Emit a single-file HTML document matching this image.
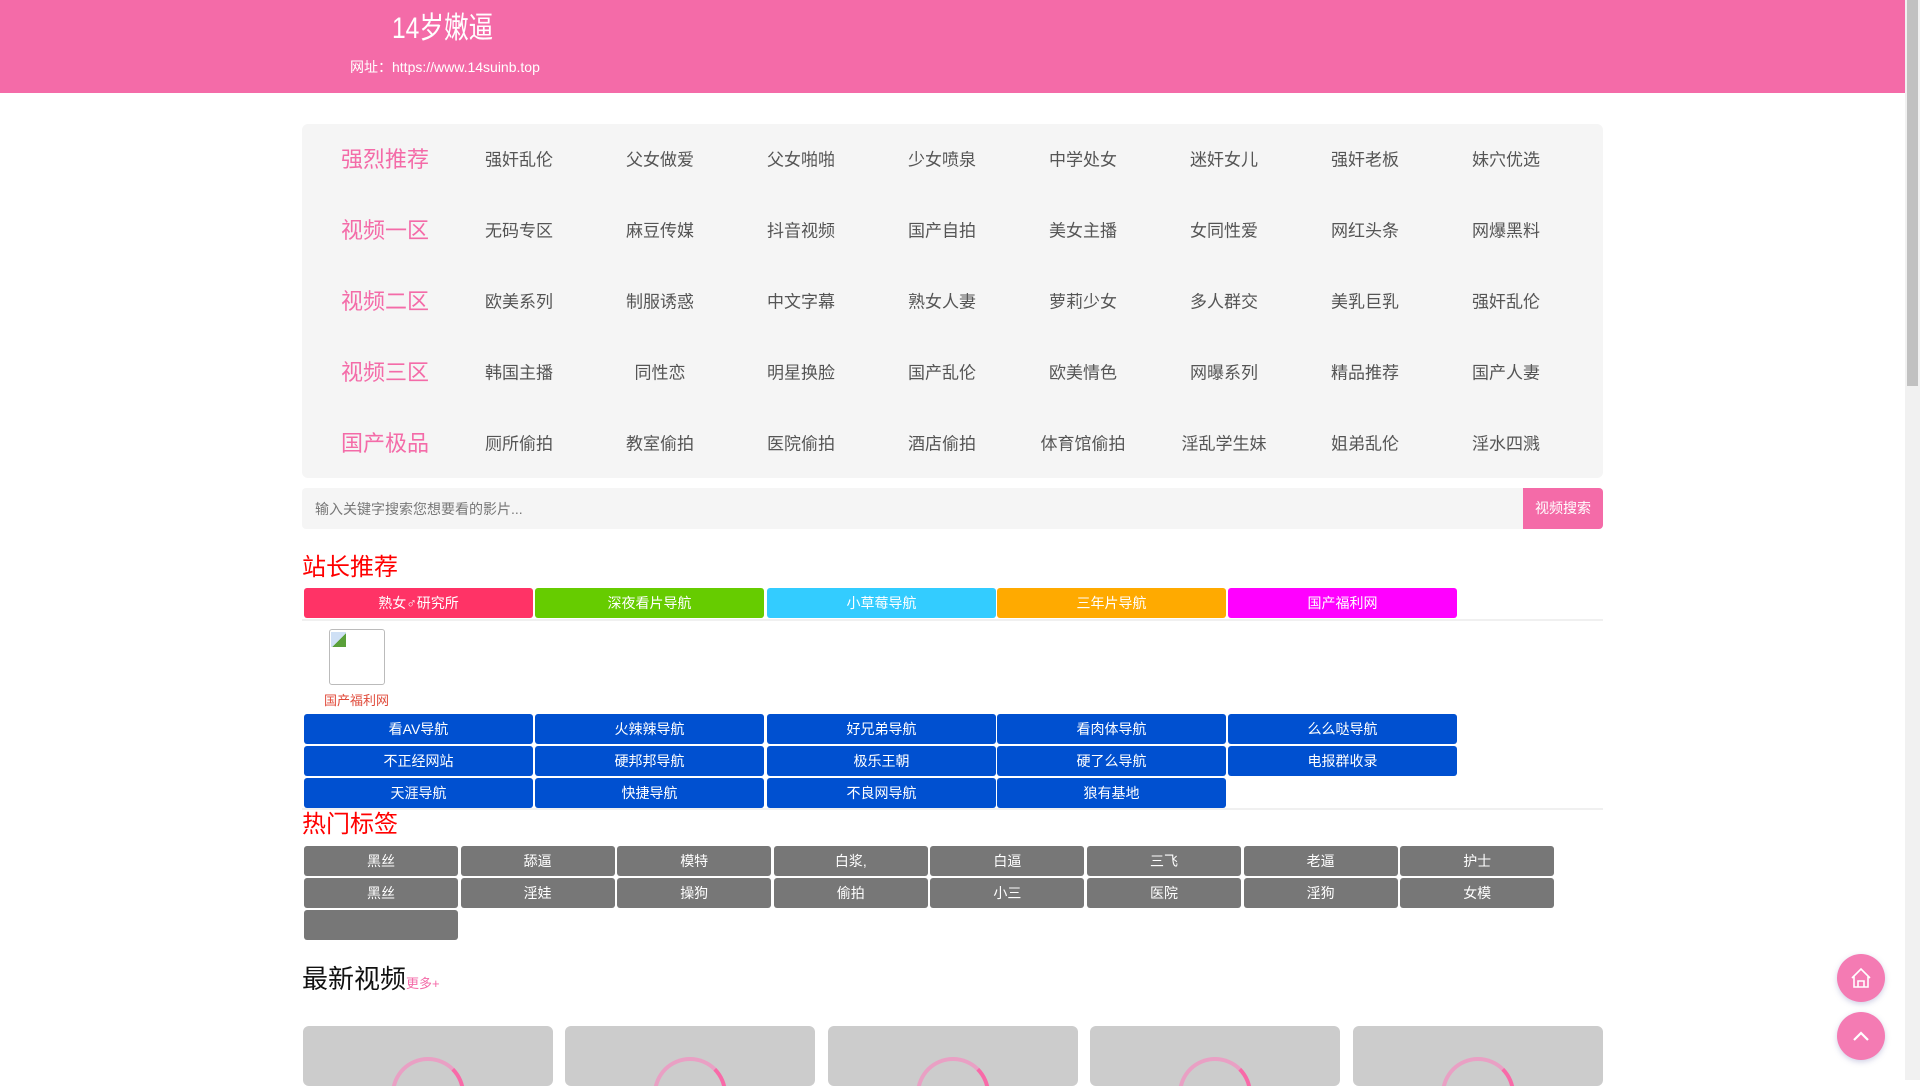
<!DOCTYPE html>
<html><head><meta charset="utf-8"><style>
*{margin:0;padding:0;box-sizing:border-box}
body{width:1920px;height:1080px;overflow:hidden;background:#fff;font-family:"Liberation Sans","Noto Sans CJK SC",sans-serif;position:relative}
.a{position:absolute}
.hdr{left:0;top:0;width:1905px;height:93px;background:#f46ba8}
.nav{left:302px;top:124px;width:1301px;height:354px;background:#f5f5f5;border-radius:6px}
.c{position:absolute;transform:translate(-50%,-50%);white-space:nowrap;font-size:17px;color:#555}
.c.r{color:#f46ba8;font-size:22px}
.btn{position:absolute;height:30px;line-height:30px;text-align:center;color:#fff;font-size:14px;border-radius:3px}
.tag{position:absolute;width:154px;height:30px;line-height:30px;text-align:center;color:#fff;font-size:14px;background:#777;border-radius:3px}
.card{position:absolute;top:1026px;width:250px;height:60px;background:#ccc;border-radius:6px;overflow:hidden}
.card i{position:absolute;left:88px;top:31px;width:74px;height:74px;border-radius:50%;border:4px solid #e9a0c4;border-top-color:#e9a0c4;border-right-color:#f86aa8}
.fb{position:absolute;left:1837px;width:48px;height:48px;border-radius:50%;background:#f47bb3;box-shadow:0 2px 6px rgba(120,120,180,.35)}
</style></head><body>
<div class="a hdr"></div>
<div class="a" style="left:392px;top:10px;color:#fff;font-size:30px;line-height:38px;transform:scaleX(0.82);transform-origin:left center">14岁嫩逼</div>
<div class="a" style="left:350px;top:58px;color:#fff;font-size:14px;line-height:18px">网址：https://www.14suinb.top</div>
<div class="a" style="left:1905px;top:0;width:15px;height:1080px;background:#f1f1f1"></div>
<div class="a" style="left:1907px;top:0;width:11px;height:386px;background:#c1c1c1"></div>
<div class="a nav"></div>
<div id="navc"></div>
<div class="a" style="left:302px;top:488px;width:1301px;height:41px;background:#f5f5f5;border-radius:4px"></div>
<div class="a" style="left:315px;top:499px;font-size:14px;color:#777">输入关键字搜索您想要看的影片...</div>
<div class="a" style="left:1523px;top:488px;width:80px;height:41px;background:#f46ba8;border-radius:0 4px 4px 0;color:#fff;font-size:14px;line-height:41px;text-align:center">视频搜索</div>
<div class="a" style="left:302px;top:553px;font-size:24px;color:#f00;line-height:30px">站长推荐</div>
<div class="a" style="left:302px;top:619px;width:1301px;height:2px;background:#f0f0f0"></div>
<div class="a" style="left:329px;top:629px;width:56px;height:56px;border:1px solid #bbb;border-radius:3px;background:#fff"></div>
<div class="a" style="left:331px;top:632px;width:15px;height:15px;background:linear-gradient(135deg,#cfe0f5 55%,#5aa03a 55%)"></div>
<div class="a" style="left:324px;top:690px;font-size:13px;color:#e04a3a">国产福利网</div>
<div class="a" style="left:302px;top:808px;width:1301px;height:2px;background:#f0f0f0"></div>
<div class="a" style="left:302px;top:810px;font-size:24px;color:#f00;line-height:30px">热门标签</div>
<div class="a" style="left:302px;top:962px;font-size:26px;color:#111;line-height:34px">最新视频<span style="font-size:13px;color:#f46ba8">更多+</span></div>
<div id="rest"></div>
<div class="fb" style="top:954px"><svg width="48" height="48" viewBox="0 0 48 48"><path d="M15 24 L24 15 L33 24 M17 22 V33 H31 V22 M21 33 V27 H27 V33" fill="none" stroke="#fff" stroke-width="1.6"/></svg></div>
<div class="fb" style="top:1012px"><svg width="48" height="48" viewBox="0 0 48 48"><path d="M17 28 L24 21 L31 28" fill="none" stroke="#fff" stroke-width="2.2"/></svg></div>
<script>
var rows=[["强烈推荐","强奸乱伦","父女做爱","父女啪啪","少女喷泉","中学处女","迷奸女儿","强奸老板","妹穴优选"],
["视频一区","无码专区","麻豆传媒","抖音视频","国产自拍","美女主播","女同性爱","网红头条","网爆黑料"],
["视频二区","欧美系列","制服诱惑","中文字幕","熟女人妻","萝莉少女","多人群交","美乳巨乳","强奸乱伦"],
["视频三区","韩国主播","同性恋","明星换脸","国产乱伦","欧美情色","网曝系列","精品推荐","国产人妻"],
["国产极品","厕所偷拍","教室偷拍","医院偷拍","酒店偷拍","体育馆偷拍","淫乱学生妹","姐弟乱伦","淫水四溅"]];
var xs=[385,519,660,801,942,1083,1224,1365,1506],h="";
rows.forEach(function(r,i){r.forEach(function(t,j){h+='<div class="c'+(j?'':' r')+'" style="left:'+xs[j]+'px;top:'+(158+i*71)+'px">'+t+'</div>';});});
document.getElementById('navc').innerHTML=h;
h="";
var bx=[304,535,767,997,1228];
var top1=[["熟女♂研究所","#ff3366"],["深夜看片导航","#66cc00"],["小草莓导航","#33ccff"],["三年片导航","#ffaa00"],["国产福利网","#ff00ff"]];
top1.forEach(function(b,i){h+='<div class="btn" style="left:'+bx[i]+'px;top:588px;width:229px;background:'+b[1]+'">'+b[0]+'</div>';});
var blue=[["看AV导航","火辣辣导航","好兄弟导航","看肉体导航","么么哒导航"],["不正经网站","硬邦邦导航","极乐王朝","硬了么导航","电报群收录"],["天涯导航","快捷导航","不良网导航","狼有基地"]];
blue.forEach(function(r,i){r.forEach(function(t,j){h+='<div class="btn" style="left:'+bx[j]+'px;top:'+(714+i*32)+'px;width:229px;background:#0050d0">'+t+'</div>';});});
var tags=[["黑丝","舔逼","模特","白浆,","白逼","三飞","老逼","护士"],["黑丝","淫娃","操狗","偷拍","小三","医院","淫狗","女模"],[""]];
tags.forEach(function(r,i){r.forEach(function(t,j){h+='<div class="tag" style="left:'+(304+j*156.6)+'px;top:'+(846+i*32)+'px">'+t+'</div>';});});
[303,565,828,1090,1353].forEach(function(x){h+='<div class="card" style="left:'+x+'px"><i></i></div>';});
document.getElementById('rest').innerHTML=h;
</script>
</body></html>
